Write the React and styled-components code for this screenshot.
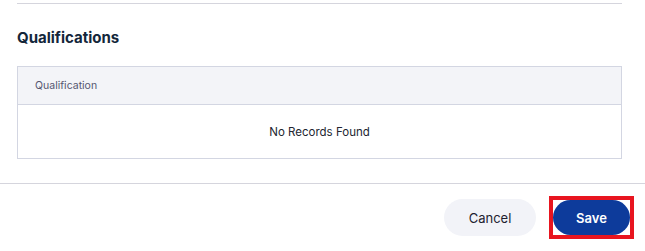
import React from "react";
import styled, { createGlobalStyle } from "styled-components";

const GlobalStyle = createGlobalStyle`
  body {
    margin: 0;
    background: #ffffff;
    font-family: Inter, "Noto Sans", "Liberation Sans", sans-serif;
  }
`;

const Page = styled.div`
  width: 645px;
  height: 251px;
  overflow: hidden;
  background: #ffffff;
`;

const Section = styled.section`
  padding: 0 23px 0 17px;
`;

const TopRule = styled.hr`
  margin: 3px 0 0 0;
  border: none;
  border-top: 1px solid #d5d5dd;
`;

const Title = styled.h2`
  margin: 24px 0 19px 0;
  font-size: 15px;
  line-height: 19px;
  font-weight: 700;
  color: #13263a;
`;

const Table = styled.div`
  border: 1px solid #d3d6e2;
`;

const HeadRow = styled.div`
  height: 37px;
  display: flex;
  align-items: center;
  padding: 0 17px;
  background: #f3f4f8;
  border-bottom: 1px solid #d3d6e2;
  font-size: 10.5px;
  color: #555670;
`;

const EmptyRow = styled.div`
  height: 53px;
  display: flex;
  align-items: center;
  justify-content: center;
  font-size: 11.5px;
  color: #222530;
`;

const Footer = styled.footer`
  margin-top: 24px;
  border-top: 1px solid #d5d5dd;
  display: flex;
  justify-content: flex-end;
  align-items: center;
  gap: 13px;
  padding: 12px 11px 0 0;
`;

const Button = styled.button`
  height: ${(p) => (p.$primary ? "35px" : "37px")};
  width: ${(p) => (p.$primary ? "77px" : "92px")};
  border: none;
  border-radius: 20px;
  font-family: inherit;
  font-size: 13px;
  font-weight: ${(p) => (p.$primary ? 600 : 400)};
  color: ${(p) => (p.$primary ? "#ffffff" : "#1e2230")};
  background: ${(p) => (p.$primary ? "#0d3b9b" : "#f2f3f8")};
  cursor: pointer;
`;

const Highlight = styled.span`
  display: inline-flex;
  border: 4px solid #e8151f;
`;

export default function App() {
  return (
    <Page>
      <GlobalStyle />
      <Section>
        <TopRule />
        <Title>Qualifications</Title>
        <Table>
          <HeadRow>Qualification</HeadRow>
          <EmptyRow>No Records Found</EmptyRow>
        </Table>
      </Section>
      <Footer>
        <Button>Cancel</Button>
        <Highlight>
          <Button $primary>Save</Button>
        </Highlight>
      </Footer>
    </Page>
  );
}
